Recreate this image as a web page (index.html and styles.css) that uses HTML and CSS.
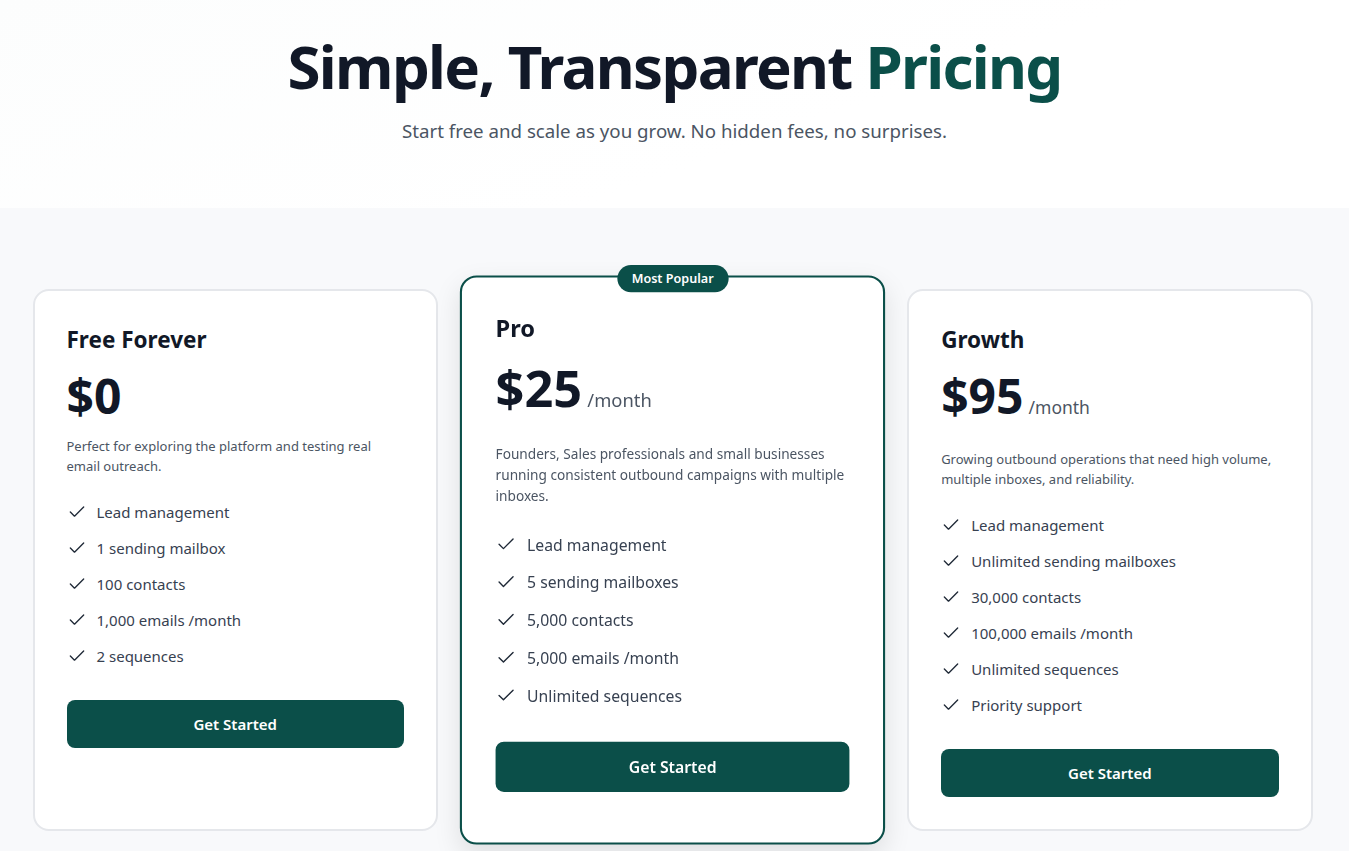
FILE: index.html
```html
<!DOCTYPE html>
<html lang="en">
<head>
    <meta charset="UTF-8">
    <meta name="viewport" content="width=device-width, initial-scale=1.0">
    <title>Pricing</title>
    <link rel="stylesheet" href="styles.css">
</head>
<body>
    <section class="hero">
        <h1>Simple, Transparent <span class="accent">Pricing</span></h1>
        <p>Start free and scale as you grow. No hidden fees, no surprises.</p>
    </section>

    <section class="pricing">
        <div class="plans">
            <div class="plan">
                <h3 class="plan-name">Free Forever</h3>
                <div class="plan-price">
                    <span class="amount">$0</span>
                </div>
                <p class="plan-desc">Perfect for exploring the platform and testing real email outreach.</p>
                <ul class="features">
                    <li><svg class="check" viewBox="0 0 24 24"><path d="M20 6 9 17l-5-5"/></svg>Lead management</li>
                    <li><svg class="check" viewBox="0 0 24 24"><path d="M20 6 9 17l-5-5"/></svg>1 sending mailbox</li>
                    <li><svg class="check" viewBox="0 0 24 24"><path d="M20 6 9 17l-5-5"/></svg>100 contacts</li>
                    <li><svg class="check" viewBox="0 0 24 24"><path d="M20 6 9 17l-5-5"/></svg>1,000 emails /month</li>
                    <li><svg class="check" viewBox="0 0 24 24"><path d="M20 6 9 17l-5-5"/></svg>2 sequences</li>
                </ul>
                <button class="plan-button">Get Started</button>
            </div>

            <div class="plan popular">
                <span class="badge">Most Popular</span>
                <h3 class="plan-name">Pro</h3>
                <div class="plan-price has-period">
                    <span class="amount">$25</span>
                    <span class="period">/month</span>
                </div>
                <p class="plan-desc">Founders, Sales professionals and small businesses running consistent outbound campaigns with multiple inboxes.</p>
                <ul class="features">
                    <li><svg class="check" viewBox="0 0 24 24"><path d="M20 6 9 17l-5-5"/></svg>Lead management</li>
                    <li><svg class="check" viewBox="0 0 24 24"><path d="M20 6 9 17l-5-5"/></svg>5 sending mailboxes</li>
                    <li><svg class="check" viewBox="0 0 24 24"><path d="M20 6 9 17l-5-5"/></svg>5,000 contacts</li>
                    <li><svg class="check" viewBox="0 0 24 24"><path d="M20 6 9 17l-5-5"/></svg>5,000 emails /month</li>
                    <li><svg class="check" viewBox="0 0 24 24"><path d="M20 6 9 17l-5-5"/></svg>Unlimited sequences</li>
                </ul>
                <button class="plan-button">Get Started</button>
            </div>

            <div class="plan">
                <h3 class="plan-name">Growth</h3>
                <div class="plan-price has-period">
                    <span class="amount">$95</span>
                    <span class="period">/month</span>
                </div>
                <p class="plan-desc">Growing outbound operations that need high volume, multiple inboxes, and reliability.</p>
                <ul class="features">
                    <li><svg class="check" viewBox="0 0 24 24"><path d="M20 6 9 17l-5-5"/></svg>Lead management</li>
                    <li><svg class="check" viewBox="0 0 24 24"><path d="M20 6 9 17l-5-5"/></svg>Unlimited sending mailboxes</li>
                    <li><svg class="check" viewBox="0 0 24 24"><path d="M20 6 9 17l-5-5"/></svg>30,000 contacts</li>
                    <li><svg class="check" viewBox="0 0 24 24"><path d="M20 6 9 17l-5-5"/></svg>100,000 emails /month</li>
                    <li><svg class="check" viewBox="0 0 24 24"><path d="M20 6 9 17l-5-5"/></svg>Unlimited sequences</li>
                    <li><svg class="check" viewBox="0 0 24 24"><path d="M20 6 9 17l-5-5"/></svg>Priority support</li>
                </ul>
                <button class="plan-button">Get Started</button>
            </div>
        </div>
    </section>
</body>
</html>
```

FILE: styles.css
```css
body {
    margin: 0;
    font-family: "Noto Sans", "Open Sans", sans-serif;
    color: #111827;
    background-color: #f8f9fb;
}
.hero {
    background: linear-gradient(160deg, #fcfdfd, #ffffff 60%);
    text-align: center;
    padding: 32px 16px 63px;
}
.hero h1 {
    margin: 0;
    font-size: 60px;
    line-height: 69px;
    font-weight: 700;
    letter-spacing: -1.7px;
    color: #111827;
}
.hero .accent {
    color: #0b4f49;
}
.hero p {
    margin: 16px 0 0;
    font-size: 18.7px;
    line-height: 28px;
    color: #4b5563;
}
.pricing {
    padding: 81px 4px 80px 0;
}
.plans {
    max-width: 1280px;
    margin: 0 auto;
    display: grid;
    grid-template-columns: repeat(3, 1fr);
    gap: 32px;
}
.plan {
    position: relative;
    background: white;
    border: 2px solid #e5e7eb;
    border-radius: 16px;
    padding: 32px;
}
.plan.popular {
    border-color: #0b4f49;
    transform: scale(1.05);
    box-shadow: 0 10px 25px rgba(0,0,0,0.1);
}
.badge {
    position: absolute;
    top: -12px;
    left: 50%;
    transform: translateX(-50%);
    background-color: #0b4f49;
    color: white;
    font-size: 12px;
    font-weight: 600;
    line-height: 18px;
    padding: 4px 14px;
    border-radius: 999px;
    white-space: nowrap;
}
.plan-name {
    margin: 0 0 16px;
    padding-top: 1px;
    font-size: 22.5px;
    line-height: 32px;
    font-weight: 700;
}
.plan-price {
    display: flex;
    align-items: baseline;
    gap: 5px;
    margin-bottom: 16px;
}
.plan-price.has-period {
    margin-bottom: 29px;
}
.amount {
    font-size: 48px;
    line-height: 48px;
    font-weight: 700;
}
.period {
    font-size: 17.5px;
    color: #4b5563;
}
.plan-desc {
    margin: 0 0 24px;
    font-size: 13px;
    line-height: 20px;
    color: #4b5563;
}
.features {
    list-style: none;
    margin: 0 0 32px;
    padding: 0;
    display: flex;
    flex-direction: column;
    gap: 12px;
}
.features li {
    display: flex;
    align-items: center;
    gap: 10px;
    font-size: 15px;
    line-height: 24px;
    color: #374151;
}
.check {
    width: 20px;
    height: 20px;
    flex-shrink: 0;
    fill: none;
    stroke: #1f2937;
    stroke-width: 1.6;
    stroke-linecap: round;
    stroke-linejoin: round;
}
.plan-button {
    width: 100%;
    height: 48px;
    background-color: #0b4f49;
    color: white;
    border: none;
    border-radius: 8px;
    font-family: inherit;
    font-size: 15px;
    font-weight: 600;
    cursor: pointer;
}
.plan-button:hover {
    background-color: #0a433e;
}
```
